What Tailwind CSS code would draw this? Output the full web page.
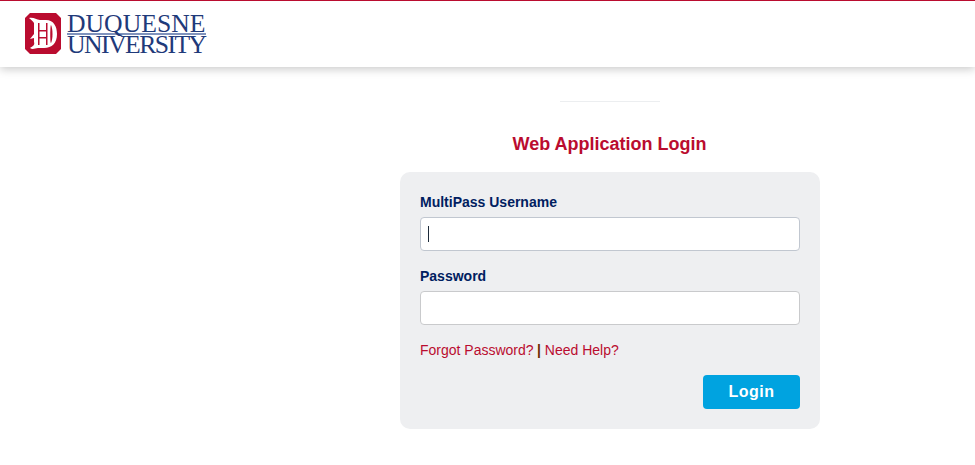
<!DOCTYPE html>
<html lang="en">
<head>
<meta charset="utf-8">
<title>Web Application Login</title>
<script src="https://cdn.jsdelivr.net/npm/@tailwindcss/browser@4"></script>
</head>
<body class="bg-white font-['Liberation_Sans',Arial,sans-serif] overflow-hidden">
<header class="h-[67px] border-t border-[#ba0c2f] bg-white shadow-[0_2px_9px_rgba(0,0,0,0.22)] flex items-start pl-[25px] pt-[12px]">
  <div class="flex items-start gap-[6px]">
    <svg width="36" height="41" viewBox="0 0 36 41" class="shrink-0">
      <path d="M5 0H31L36 5V36L31 41H5L0 36V5Z" fill="#ba0c2f"/>
      <path d="M4 5C9 4 11 7 15 7H21C29 7 32 14 32 21C32 30 27 35 19 35H13C10 35 8 37 5 35C8 33 10 32 9 29V25L5 26L9 21V10C8 8 6 7 4 5Z" fill="#fff"/>
      <path d="M13 10H14.500V32H13ZM21 10H22.500V32H21ZM14 17H22V18.500H14ZM14 24H22V25.500H14Z" fill="#ba0c2f"/>
      <path d="M26 12C28 16 28 26 26 30C25 31 25 13 26 12Z" fill="#ba0c2f"/>
    </svg>
    <div class="w-[139px] text-[#1f3a7a] font-['Liberation_Serif',serif] whitespace-nowrap">
      <div class="text-[25.7px] h-[20px] leading-[22px]">DUQUESNE</div>
      <div class="h-[2px] w-[139px] bg-[#8093bd]"></div>
      <div class="text-[25.7px] h-[19px] leading-[19px] tracking-[-1.55px]">UNIVERSITY</div>
    </div>
  </div>
</header>
<main class="ml-[400px] w-[420px]">
  <div class="mx-auto mt-[34px] h-px w-[100px] bg-[#eceef0]"></div>
  <h1 class="mt-[31px] text-center text-[18px] leading-[22px] font-bold text-[#ba0c2f] -translate-x-[0.5px]">Web Application Login</h1>
  <form class="mt-[17px] h-[257px] rounded-[10px] bg-[#eeeff1] px-5 pt-[22px]">
    <label class="block text-[14px] leading-[17px] font-bold text-[#002060]">MultiPass Username</label>
    <div class="mt-[6px] h-[34px] rounded-[4px] border border-[#c1c7d0] bg-white flex items-center pl-[7px]">
      <span class="block h-[16px] w-px bg-[#1d2b3a]"></span>
    </div>
    <label class="block mt-[17px] text-[14px] leading-[17px] font-bold text-[#002060]">Password</label>
    <div class="mt-[6px] h-[34px] rounded-[4px] border border-[#c9cacc] bg-white"></div>
    <p class="mt-[17px] text-[14px] leading-[17px] text-[#333]"><a class="text-[#ba0c2f]">Forgot Password?</a> <span class="font-bold text-[#6b2a00] -ml-[0.5px]">|</span> <a class="text-[#ba0c2f]">Need Help?</a></p>
    <div class="mt-[16px] flex justify-end">
      <button type="button" class="h-[34px] w-[97px] rounded-[4px] bg-[#00a3e0] text-white text-[16px] font-bold tracking-[0.5px]">Login</button>
    </div>
  </form>
</main>
</body>
</html>
